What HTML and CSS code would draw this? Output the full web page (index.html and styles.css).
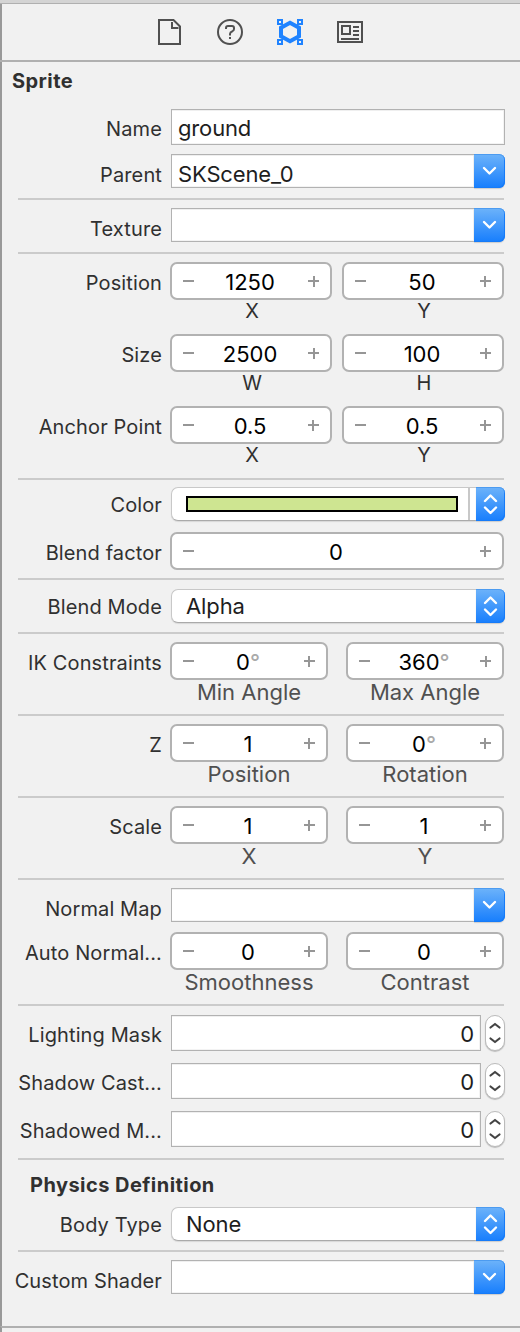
FILE: index.html
```
<!DOCTYPE html>
<html lang="en">
<head>
<meta charset="utf-8">
<title>Sprite Inspector</title>
<link rel="stylesheet" href="styles.css">
</head>
<body>
<svg class="defs" width="0" height="0">
  <symbol id="down" viewBox="0 0 31 34"><path d="M10 14l5.5 5.5L21 14" fill="none" stroke="#fff" stroke-width="2.4" stroke-linecap="round" stroke-linejoin="round"/></symbol>
  <symbol id="updown" viewBox="0 0 29 34"><path d="M9 14l5.500-5.500L20 14M9 20.500l5.500 5.500L20 20.500" fill="none" stroke="#fff" stroke-width="2.4" stroke-linecap="round" stroke-linejoin="round"/></symbol>
  <symbol id="step" viewBox="0 0 18 34"><path d="M4.500 11.500L9 8L13.500 11.500M4.500 22.500L9 26L13.500 22.500" fill="none" stroke="#444" stroke-width="2.2" stroke-linecap="round" stroke-linejoin="round"/></symbol>
</svg>
<div class="panel">
  <header class="tabs">
    <svg width="26" height="26" viewBox="0 0 26 26"><path d="M3 1h14.500l6.500 6.500V25H3z" transform="translate(-1 0)" fill="none" stroke="#505050" stroke-width="2"/><path d="M15 3v6h6.500" fill="none" stroke="#505050" stroke-width="2"/></svg>
    <svg width="26" height="26" viewBox="0 0 26 26"><circle cx="13" cy="13" r="12" fill="none" stroke="#505050" stroke-width="2"/><path d="M9 10V9q0-2 2-2h4q2 0 2 2v1q0 1.500-1.500 2.200Q13 13.200 13 15v1.500M12 19h2" fill="none" stroke="#505050" stroke-width="2"/></svg>
    <svg width="26" height="26" viewBox="0 0 26 26"><path d="M13 3.800L22 8.800V17.200L13 22.200L4 17.200V8.800z" fill="none" stroke="#1f83ff" stroke-width="4"/><path d="M1 1h4v4H1zM21 1h4v4h-4zM1 21h4v4H1zM21 21h4v4h-4z" fill="#f1f1f1" stroke="#1f83ff" stroke-width="2"/></svg>
    <svg width="26" height="26" viewBox="0 0 26 26"><path d="M1 3h24v20H1zM5 7h8v8H5zM16 8h6M16 12h6M16 16h6M4 20h18" fill="none" stroke="#505050" stroke-width="2"/></svg>
  </header>

  <main class="body">
    <h1 class="title">Sprite</h1>
    <section class="group first">
      <div class="row text"><label>Name</label><div class="field">ground</div></div>
      <div class="row combo"><label>Parent</label><div class="field">SKScene_0</div><svg class="btn"><use href="#down"/></svg></div>
    </section>
    <section class="group">
      <div class="row combo"><label>Texture</label><div class="field"></div><svg class="btn"><use href="#down"/></svg></div>
    </section>
    <section class="group numbers">
      <div class="row pair tight"><label>Position</label>
        <div class="cell"><div class="num"><i class="minus"></i><b>1250</b><i class="plus"></i></div><span class="cap">X</span></div>
        <div class="cell"><div class="num"><i class="minus"></i><b>50</b><i class="plus"></i></div><span class="cap">Y</span></div></div>
      <div class="row pair tight"><label>Size</label>
        <div class="cell"><div class="num"><i class="minus"></i><b>2500</b><i class="plus"></i></div><span class="cap">W</span></div>
        <div class="cell"><div class="num"><i class="minus"></i><b>100</b><i class="plus"></i></div><span class="cap">H</span></div></div>
      <div class="row pair tight"><label>Anchor Point</label>
        <div class="cell"><div class="num"><i class="minus"></i><b>0.5</b><i class="plus"></i></div><span class="cap">X</span></div>
        <div class="cell"><div class="num"><i class="minus"></i><b>0.5</b><i class="plus"></i></div><span class="cap">Y</span></div></div>
    </section>
    <section class="group color">
      <div class="row popup"><label>Color</label><div class="well"><div class="swatch"></div></div><svg class="btn"><use href="#updown"/></svg></div>
      <div class="row pair single"><label>Blend factor</label>
        <div class="cell"><div class="num"><i class="minus"></i><b>0</b><i class="plus"></i></div></div></div>
    </section>
    <section class="group mode">
      <div class="row popup"><label>Blend Mode</label><div class="choice">Alpha</div><svg class="btn"><use href="#updown"/></svg></div>
    </section>
    <section class="group large">
      <div class="row pair"><label>IK Constraints</label>
        <div class="cell"><div class="num"><i class="minus"></i><b>0<span class="deg">°</span></b><i class="plus"></i></div><span class="cap">Min Angle</span></div>
        <div class="cell"><div class="num"><i class="minus"></i><b>360<span class="deg">°</span></b><i class="plus"></i></div><span class="cap">Max Angle</span></div></div>
    </section>
    <section class="group large">
      <div class="row pair"><label>Z</label>
        <div class="cell"><div class="num"><i class="minus"></i><b>1</b><i class="plus"></i></div><span class="cap">Position</span></div>
        <div class="cell"><div class="num"><i class="minus"></i><b>0<span class="deg">°</span></b><i class="plus"></i></div><span class="cap">Rotation</span></div></div>
    </section>
    <section class="group large">
      <div class="row pair"><label>Scale</label>
        <div class="cell"><div class="num"><i class="minus"></i><b>1</b><i class="plus"></i></div><span class="cap">X</span></div>
        <div class="cell"><div class="num"><i class="minus"></i><b>1</b><i class="plus"></i></div><span class="cap">Y</span></div></div>
    </section>
    <section class="group large">
      <div class="row combo"><label>Normal Map</label><div class="field"></div><svg class="btn"><use href="#down"/></svg></div>
      <div class="row pair"><label>Auto Normal...</label>
        <div class="cell"><div class="num"><i class="minus"></i><b>0</b><i class="plus"></i></div><span class="cap">Smoothness</span></div>
        <div class="cell"><div class="num"><i class="minus"></i><b>0</b><i class="plus"></i></div><span class="cap">Contrast</span></div></div>
    </section>
    <section class="group masks">
      <div class="row mask"><label>Lighting Mask</label><div class="field">0</div><svg class="stepper"><use href="#step"/></svg></div>
      <div class="row mask"><label>Shadow Cast...</label><div class="field">0</div><svg class="stepper"><use href="#step"/></svg></div>
      <div class="row mask"><label>Shadowed M...</label><div class="field">0</div><svg class="stepper"><use href="#step"/></svg></div>
    </section>
    <section class="group physics">
      <h2 class="title">Physics Definition</h2>
      <div class="row popup"><label>Body Type</label><div class="choice">None</div><svg class="btn"><use href="#updown"/></svg></div>
    </section>
    <section class="group shader">
      <div class="row combo"><label>Custom Shader</label><div class="field"></div><svg class="btn"><use href="#down"/></svg></div>
    </section>
  </main>
  <footer class="foot"></footer>
</div>
</body>
</html>
```
FILE: styles.css
```
* { box-sizing: border-box; }
body { margin: 0; background: #f1f1f1; font-family: Inter, "Liberation Sans", sans-serif; color: #303030; }
.defs { display: block; }
.panel { height: 1332px; border-top: 3px solid #d4d4d4; display: flex; flex-direction: column; overflow: hidden; }
.tabs { height: 59px; flex: none; border-top: 1px solid #b0b0b0; border-bottom: 2px solid #b0b0b0; padding: 0 0 0 157px; display: flex; gap: 34px; align-items: center; box-shadow: inset 2px 0 #999; }
.tabs svg { display: block; flex: none; }
.body { height: 1264px; flex: none; border-left: 2px solid #999; padding-left: 16px; }
.title { margin: 0; font-size: 20px; line-height: 24px; font-weight: 700; letter-spacing: 0.45px; white-space: nowrap; }
h1.title { padding-top: 7px; margin-left: -6px; }
.group { width: 486px; border-top: 2px solid #cbcbcb; padding: 8px 0 10px; display: flex; flex-direction: column; }
.group.first { border-top: 0; padding-top: 16px; gap: 9px; }
.group.numbers { padding-bottom: 0; }
.group.color { padding: 7px 0 8px; gap: 11px; }
.group.mode { padding: 9px 0; }
.group.large { padding-bottom: 8px; gap: 10px; }
.group.masks { padding: 9px 0 11px; gap: 12px; }
.group.physics { padding: 13px 0 9px; }
.group.physics .title { padding-left: 12px; margin-bottom: 10px; }
.group.shader { padding-bottom: 0; }
.row { display: flex; width: 487px; flex: none; }
.row label { width: 154px; margin-left: -10px; margin-right: 9px; flex: none; text-align: right; white-space: nowrap; font-size: 20px; line-height: 24px; letter-spacing: 0.12px; padding-top: 9px; }
.row.text label, .row.mask label { padding-top: 8px; }
.row.popup label { padding-top: 6px; }
.row.text { height: 36px; }
.row.combo { height: 34px; }
.field { flex: 1; background: #fff; border: 1px solid #b2b2b2; box-shadow: inset 0 1px #efefef, inset -1px -1px #f3f3f3; padding-left: 6px; font-size: 22px; line-height: 36px; letter-spacing: -0.15px; color: #1e1e1e; }
.row.combo .field { border-right: 0; line-height: 38px; }
.row.combo .btn { width: 31px; }
.btn { width: 29px; height: 34px; flex: none; border-radius: 0 6px 6px 0; background: linear-gradient(#6db3fa, #177efd); box-shadow: inset 0 1px #4c9bf0, inset -1px -1px #167bf8, 0 1px 1px #ccc; }
.row.pair label { margin-right: 8px; }
.pair { width: 486px; gap: 18px; height: 64px; }
.pair label + .cell { margin-left: -18px; }
.row.pair { width: 486px; }
.pair.tight { gap: 10px; height: 72px; }
.pair.tight label + .cell { margin-left: -10px; }
.pair.single { height: 38px; }
.cell { flex: 1; display: flex; flex-direction: column; }
.num { height: 38px; flex: none; background: #fff; border: 2px solid #b2b2b2; border-radius: 7px; padding: 0 11px; display: flex; justify-content: space-between; align-items: center; }
.num b { font-weight: 400; font-size: 22px; line-height: 34px; color: #000; padding: 2px 2px 0 0; }
.num i { width: 11px; height: 11px; flex: none; background: linear-gradient(#969696, #969696) center / 100% 2px no-repeat; }
.num .plus { background: linear-gradient(#969696, #969696) center / 100% 2px no-repeat, linear-gradient(#969696, #969696) center / 2px 100% no-repeat; }
.deg { color: #aaa; font-weight: 500; }
.cap { text-align: center; font-size: 20px; line-height: 24px; margin-top: -1px; padding-left: 2px; white-space: nowrap; }
.large .cap { font-size: 22px; color: #505050; line-height: 26px; margin-top: -1px; padding-left: 0; }
.choice, .well { flex: 1; height: 34px; background: #fff; border: 1px solid #c8c8c8; border-right: 0; border-bottom-color: #aaa; border-radius: 7px 0 0 7px; box-shadow: 0 1px 1px #d8d8d8; }
.choice { padding-left: 14px; font-size: 22px; line-height: 33px; letter-spacing: -0.1px; color: #1e1e1e; }
.well { padding: 8px 6px 0 14px; background: linear-gradient(#c8c8c8, #c8c8c8) 296px 0 / 2px 100% no-repeat #fff; }
.swatch { width: 272px; height: 16px; background: #cee591; border: 2px solid #000; }
.mask { height: 36px; }
.mask .field { width: 310px; flex: none; text-align: right; padding: 0 6px 0 0; }
.stepper { width: 20px; height: 36px; flex: none; margin-left: 4px; border-radius: 10px; border: 1px solid #bbb; background: #fff; box-shadow: 0 1px 1px #bbb; }
.foot { height: 6px; border-top: 2px solid #b0b0b0; border-left: 2px solid #999; }
```
